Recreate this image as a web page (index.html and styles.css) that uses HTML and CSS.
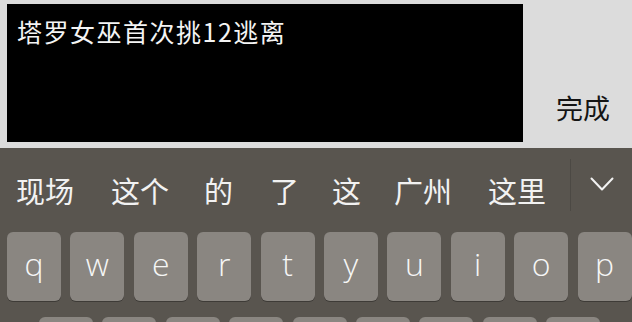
FILE: index.html
```html
<!DOCTYPE html>
<html>
<head>
<meta charset="utf-8">
<link rel="stylesheet" href="styles.css">
</head>
<body>
<div class="top">
  <div class="textbox">塔罗女巫首次挑12逃离</div>
  <div class="done">完成</div>
</div>
<div class="keyboard">
  <div class="suggest">
    <div class="cands">
      <span class="c1">现场</span><span class="c2">这个</span><span class="c3">的</span><span class="c4">了</span><span class="c5">这</span><span class="c6">广州</span><span class="c7">这里</span>
    </div>
    <div class="sep"></div>
    <div class="chev">
      <svg width="24" height="15" viewBox="0 0 24 15"><path d="M1.5 1.5 L12 12.5 L22.5 1.5" fill="none" stroke="#f2f2f2" stroke-width="2" stroke-linecap="round" stroke-linejoin="round"/></svg>
    </div>
  </div>
  <div class="row1">
    <div class="key">q</div><div class="key">w</div><div class="key">e</div><div class="key">r</div><div class="key">t</div><div class="key">y</div><div class="key">u</div><div class="key">i</div><div class="key">o</div><div class="key">p</div>
  </div>
  <div class="row2">
    <div class="key"></div><div class="key"></div><div class="key"></div><div class="key"></div><div class="key"></div><div class="key"></div><div class="key"></div><div class="key"></div><div class="key"></div>
  </div>
</div>
</body>
</html>
```

FILE: styles.css
```css
html, body {
  margin: 0;
  padding: 0;
  width: 632px;
  height: 322px;
  overflow: hidden;
  background: #dcdcdc;
  font-family: "Noto Sans CJK SC", "Noto Sans", sans-serif;
}
.top {
  height: 148px;
  display: flex;
  align-items: flex-start;
  padding: 4px 0 0 7px;
  box-sizing: border-box;
}
.textbox {
  width: 516px;
  height: 138px;
  background: #000;
  color: #f4f4f4;
  font-size: 25px;
  line-height: 30px;
  padding: 12px 0 0 10px;
  box-sizing: border-box;
  letter-spacing: 1.5px;
  white-space: pre;
}
.done {
  margin: 84px 0 0 33px;
  font-size: 27px;
  line-height: 40px;
  color: #141414;
}
.keyboard {
  height: 174px;
  background: #59554f;
  overflow: hidden;
}
.suggest {
  height: 84px;
  display: flex;
  align-items: center;
}
.cands {
  flex: 1;
  display: flex;
  align-items: center;
  padding-left: 16px;
  color: #f2f2f2;
  font-size: 29px;
  line-height: 40px;
}
.c2 { margin-left: 37px; }
.c3 { margin-left: 35px; }
.c4 { margin-left: 37px; }
.c5 { margin-left: 33px; }
.c6 { margin-left: 33px; }
.c7 { margin-left: 36px; }
.sep {
  width: 1px;
  height: 52px;
  background: #4c4944;
  margin-top: -10px;
}
.chev {
  width: 61px;
  display: flex;
  justify-content: center;
  padding-bottom: 12px;
}
.row1, .row2 {
  display: flex;
  gap: 9.4px;
  padding-left: 7px;
}
.row1 { height: 69px; }
.row2 { margin-top: 16px; padding-left: 39px; }
.key {
  width: 54px;
  height: 69px;
  flex: none;
  background: #8a8681;
  border-radius: 6px;
  box-shadow: 0 1px 0 #3e3b37;
  color: #f6f6f6;
  font-family: "Open Sans", sans-serif;
  font-weight: 300;
  font-size: 32px;
  line-height: 64px;
  text-align: center;
}
```
